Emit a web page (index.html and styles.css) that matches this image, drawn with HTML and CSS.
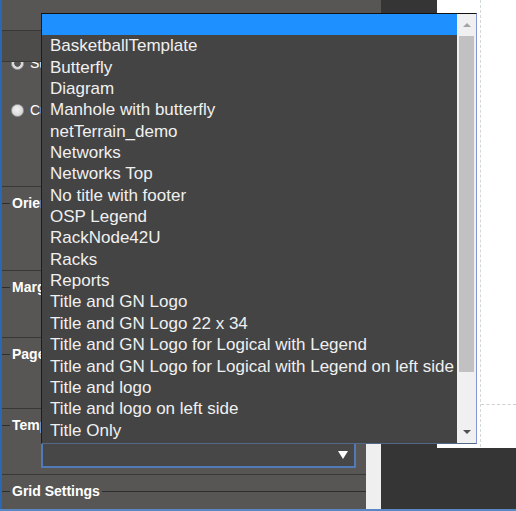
FILE: index.html
```html
<!DOCTYPE html>
<html>
<head>
<meta charset="utf-8">
<link rel="stylesheet" href="styles.css">
</head>
<body>
<div class="app">
  <aside class="panel">
    <div class="panel-main">
      <div class="sec sec-head"></div>
      <div class="sec sec-band"></div>
      <div class="sec sec-radios">
        <label class="radio-row first"><span class="radio checked"></span><span class="rlabel">Standard</span></label>
        <label class="radio-row second"><span class="radio"></span><span class="rlabel">Custom</span></label>
      </div>
      <div class="sec sec-orient"><div class="legend"><span>Orientation</span></div></div>
      <div class="sec sec-margins"><div class="legend"><span>Margins</span></div></div>
      <div class="sec sec-page"><div class="legend"><span>Page Size</span></div></div>
      <div class="sec sec-template">
        <div class="legend"><span>Template</span></div>
        <div class="select"><span class="caret"></span></div>
      </div>
      <div class="sec sec-grid"><div class="legend"><span>Grid Settings</span></div></div>
    </div>
    <div class="panel-scroll"></div>
  </aside>
  <main class="stage">
    <div class="page"><div class="guide-v"><div class="guide-h"></div></div></div>
  </main>
  <div class="listbox">
    <div class="options">
      <div class="opt sel">&nbsp;</div>
      <div class="opt">BasketballTemplate</div>
      <div class="opt">Butterfly</div>
      <div class="opt">Diagram</div>
      <div class="opt">Manhole with butterfly</div>
      <div class="opt">netTerrain_demo</div>
      <div class="opt">Networks</div>
      <div class="opt">Networks Top</div>
      <div class="opt">No title with footer</div>
      <div class="opt">OSP Legend</div>
      <div class="opt">RackNode42U</div>
      <div class="opt">Racks</div>
      <div class="opt">Reports</div>
      <div class="opt">Title and GN Logo</div>
      <div class="opt">Title and GN Logo 22 x 34</div>
      <div class="opt">Title and GN Logo for Logical with Legend</div>
      <div class="opt">Title and GN Logo for Logical with Legend on left side</div>
      <div class="opt">Title and logo</div>
      <div class="opt">Title and logo on left side</div>
      <div class="opt">Title Only</div>
    </div>
    <div class="sb">
      <div class="sb-btn up"><span class="arr-up"></span></div>
      <div class="sb-thumb"></div>
      <div class="sb-btn down"><span class="arr-down"></span></div>
    </div>
  </div>
</div>
<div class="status"></div>
</body>
</html>
```
FILE: styles.css
```css
html, body {
  margin: 0;
  padding: 0;
}
body {
  width: 516px;
  height: 511px;
  overflow: hidden;
  background: #ffffff;
  font-family: "Liberation Sans", Arial, sans-serif;
}
.app {
  position: relative;
  display: flex;
  height: 509px;
}
.panel {
  width: 379px;
  flex: none;
  display: flex;
  background: #585654;
  border-left: 2px solid #2b68b4;
}
.panel-main {
  width: 364px;
  display: flex;
  flex-direction: column;
}
.panel-scroll {
  width: 15px;
  margin-top: 62px;
  background: #efefef;
}
.sec {
  border-bottom: 1px solid #393837;
  flex: none;
  overflow: hidden;
}
.sec-head { height: 30px; }
.sec-band { height: 30px; background: #4e4c4a; }
.sec-radios { height: 124px; }
.sec-orient { height: 83px; }
.sec-margins { height: 66px; }
.sec-page { height: 70px; }
.sec-template { height: 65px; }
.sec-grid { flex: 1; border-bottom: none; }

.radio-row {
  display: flex;
  align-items: center;
  height: 14px;
  margin-left: 9px;
  gap: 6px;
  color: #ffffff;
  font-size: 14px;
}
.radio-row.first { margin-top: -6px; }
.radio-row.second { margin-top: 33px; }
.radio {
  width: 13px;
  height: 13px;
  box-sizing: border-box;
  border-radius: 50%;
  border: 1px solid #9c9c9c;
  background: radial-gradient(circle at 45% 40%, #f2f2f2 0%, #dcdcdc 60%, #c8c8c8 100%);
  flex: none;
}
.radio.checked {
  background: radial-gradient(circle, #555555 0%, #555555 38%, #d8d8d8 45%, #e6e6e6 100%);
}

.legend {
  display: flex;
  align-items: center;
  height: 18px;
  margin-top: 7px;
  color: #ffffff;
  font-weight: bold;
  font-size: 14px;
  white-space: nowrap;
}
.legend::before {
  content: "";
  width: 8px;
  height: 1px;
  background: #2e2e2e;
  flex: none;
}
.legend span { padding: 0 2px; }
.legend::after {
  content: "";
  flex: 1;
  height: 1px;
  background: #2e2e2e;
}

.select {
  margin: 7px 0 0 39px;
  width: 315px;
  height: 27px;
  box-sizing: border-box;
  border: 2px solid #5279b8;
  background: #474747;
  display: flex;
  justify-content: flex-end;
  align-items: center;
  padding-right: 6px;
}
.caret {
  width: 0;
  height: 0;
  border-left: 5px solid transparent;
  border-right: 5px solid transparent;
  border-top: 8px solid #ffffff;
}

.stage {
  flex: 1;
  background: #353535;
}
.page {
  margin-left: 56px;
  height: 448px;
  background: #ffffff;
  padding-left: 43px;
  box-sizing: border-box;
}
.guide-v {
  height: 447px;
  border-left: 1px dashed #d2d8d2;
}
.guide-h {
  height: 405px;
  box-sizing: border-box;
  border-bottom: 1px dashed #cfcfcf;
}

.listbox {
  position: absolute;
  left: 41px;
  top: 13px;
  width: 436px;
  height: 431px;
  box-sizing: border-box;
  border-top: 1px solid #111111;
  border-left: 1px solid #1c1c1c;
  border-right: 1px solid #8494d4;
  border-bottom: 1px solid #56688a;
  display: flex;
}
.options {
  flex: 1;
  background: #444444;
  overflow: hidden;
}
.opt {
  height: 21.35px;
  line-height: 21.35px;
  padding-left: 8px;
  font-size: 17px;
  color: #f0f0f0;
  white-space: nowrap;
}
.opt.sel { background: #1e90ff; }
.sb {
  width: 19px;
  background: #f0f0f0;
  display: flex;
  flex-direction: column;
}
.sb-btn {
  display: flex;
  justify-content: center;
  align-items: center;
}
.sb-btn.up { height: 22px; }
.sb-btn.down { height: 18px; margin-top: auto; margin-bottom: 2px; }
.arr-up {
  width: 0; height: 0;
  border-left: 4px solid transparent;
  border-right: 4px solid transparent;
  border-bottom: 4px solid #a3a3a3;
}
.arr-down {
  width: 0; height: 0;
  border-left: 4px solid transparent;
  border-right: 4px solid transparent;
  border-top: 4px solid #505050;
}
.sb-thumb {
  margin: 0 2px;
  height: 336px;
  background: #c1c1c1;
}
.status {
  height: 2px;
  background: #5a88c4;
}
```
